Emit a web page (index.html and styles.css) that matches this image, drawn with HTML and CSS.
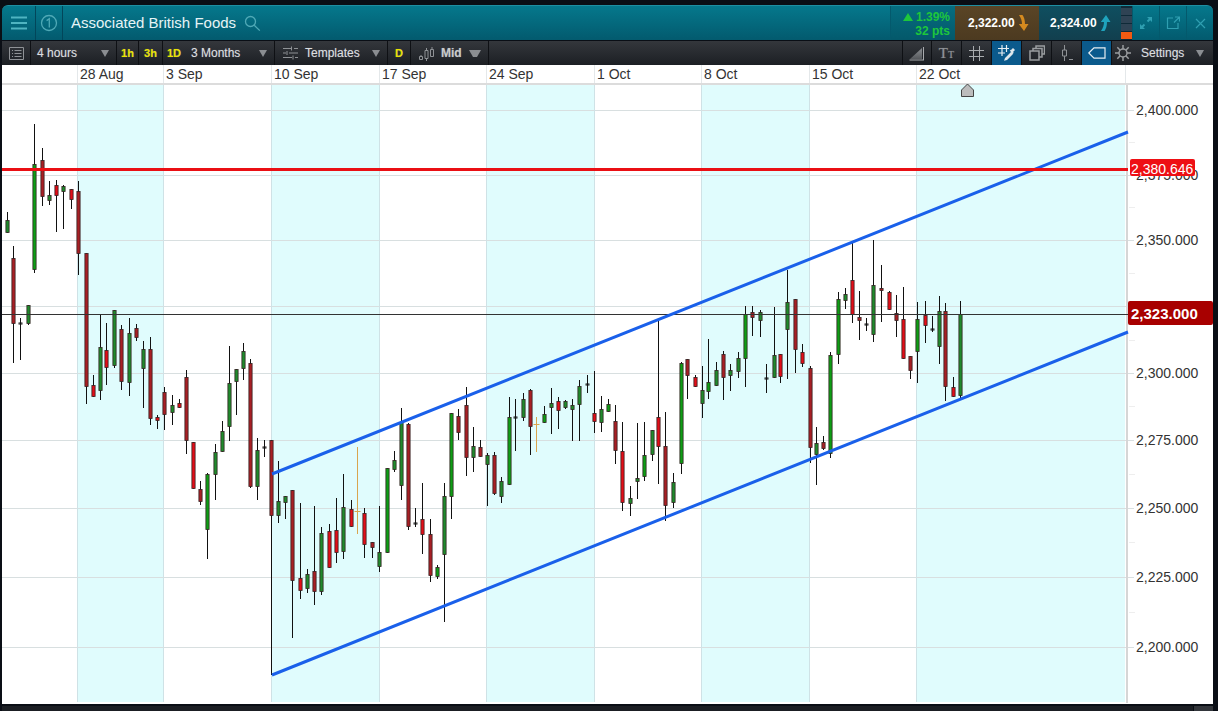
FILE: index.html
```html
<!DOCTYPE html>
<html lang="en">
<head>
<meta charset="utf-8">
<title>Associated British Foods</title>
<link rel="stylesheet" href="styles.css">
</head>
<body>
<div class="window">
  <header class="titlebar">
    <button class="tb-cell tb-menu" aria-label="Menu">
      <svg width="16" height="14" viewBox="0 0 16 14"><path class="ic-teal" d="M0 1.500h16M0 7h16M0 12.500h16"/></svg>
    </button>
    <div class="tb-cell tb-num">
      <svg width="18" height="18" viewBox="0 0 18 18"><circle class="ic-teal-thin" cx="9" cy="9" r="7.500"/><path class="ic-teal-thin" d="M6.600 6.600 9.300 4.800v8.600"/></svg>
    </div>
    <h1 class="title">Associated British Foods</h1>
    <svg class="search" width="17" height="17" viewBox="0 0 17 17"><circle class="ic-teal-thin" cx="6.500" cy="6.500" r="5"/><path class="ic-teal-thin" d="m10.200 10.200 5.600 5.400"/></svg>
    <div class="spacer"></div>
    <div class="change">
      <div class="change-top"><span class="tri-up"></span>1.39%</div>
      <div>32 pts</div>
    </div>
    <div class="quote quote-sell">
      <span>2,322.00</span>
      <svg width="11" height="16" viewBox="0 0 11 16"><path class="arrow-sell" d="M1 0h3.500c1.500 2 2.500 5 2.500 9H10.500L6 16 .8 9H4C4 6 3 3 1 0Z"/></svg>
    </div>
    <div class="quote quote-buy">
      <span>2,324.00</span>
      <svg width="11" height="16" viewBox="0 0 11 16"><path class="arrow-buy" d="M1 16h3.500C6 14 7 11 7 7h3.500L6 0 .8 7H4C4 10 3 13 1 16Z"/></svg>
    </div>
    <div class="signal"><i></i><i></i><i></i><i class="on"></i></div>
    <div class="tb-cell win-btn">
      <svg width="14" height="14" viewBox="0 0 14 14"><path class="ic-dim-fill" d="M8 1h5v5l-1.800-1.800-2 2-1.400-1.400 2-2ZM6 13H1V8l1.800 1.800 2-2 1.400 1.400-2 2Z"/></svg>
    </div>
    <div class="tb-cell win-btn">
      <svg width="14" height="14" viewBox="0 0 14 14"><path class="ic-dim" d="M7 2H1.500v10.500H12V7M8 6.500 13 1.500M9 1h4.500v4.500"/></svg>
    </div>
    <div class="tb-cell win-btn win-close">
      <svg width="11" height="11" viewBox="0 0 11 11"><path class="ic-dim" d="m1 1 9 9M10 1l-9 9"/></svg>
    </div>
  </header>

  <nav class="toolbar">
    <div class="tool tool-list">
      <svg width="15" height="13" viewBox="0 0 15 13"><path class="ic-grey" d="M.5.500h14v12H.500zM3 3.500h1M5.500 3.500h7M3 6.500h1M5.500 6.500h7M3 9.500h1M5.500 9.500h7"/></svg>
    </div>
    <div class="tool tool-select tool-hours"><span>4 hours</span><span class="caret"></span></div>
    <div class="tool tool-key tool-1h">1h</div>
    <div class="tool tool-key tool-3h">3h</div>
    <div class="tool tool-key tool-1d">1D</div>
    <div class="tool tool-select tool-months"><span>3 Months</span><span class="caret"></span></div>
    <div class="tool tool-select tool-templates">
      <svg width="15" height="14" viewBox="0 0 15 14"><path class="ic-grey" d="M0 2.500h8M11 2.500h4M8.500 .5v4M0 7h3M6 7h9M4 5v4M0 11.500h9M12 11.500h3M10 9.500v4"/></svg>
      <span>Templates</span><span class="caret"></span>
    </div>
    <div class="tool tool-key tool-d">D</div>
    <div class="tool tool-select tool-mid">
      <svg width="15" height="15" viewBox="0 0 15 15"><path class="ic-grey" d="M.5 10.500h3v3h-3zM6 4.500h3v8H6zM11.500 3.500h3v7h-3zM7.500 2v2.500M7.500 12.500V15M13 1v2.500M2 9v1.500"/></svg>
      <b>Mid</b><span class="caret"></span>
    </div>
    <div class="spacer"></div>
    <div class="tool tool-icon tool-first">
      <svg width="16" height="15" viewBox="0 0 16 15"><defs><linearGradient id="trend" x1="0" y1="0" x2="0" y2="1"><stop offset="0" stop-color="#8d9094"/><stop offset="1" stop-color="#55585c"/></linearGradient></defs><path class="ic-fill-grey" d="M1 13 13 2v11Z"/><path class="ic-light" d="M.5 14H15M14.500 1v13"/></svg>
    </div>
    <div class="tool tool-icon"><span class="tt">T<small>T</small></span></div>
    <div class="tool tool-icon tool-grid">
      <svg width="15" height="15" viewBox="0 0 15 15"><path class="ic-light" d="M4.500 0v15M10.500 0v15M0 4.500h15M0 10.500h15"/></svg>
    </div>
    <div class="tool tool-icon tool-on tool-grid-pick">
      <svg width="18" height="16" viewBox="0 0 18 16"><path class="ic-white" d="M4 0v11M8.500 0v7M0 3.500h11M0 8h7"/><path class="ic-white-fill" d="m7 13 6-6 2 2-6 6-3 .8ZM13 5l2-2 2 2-2 2 .8.800-1 1-3-3 1-1Z"/></svg>
    </div>
    <div class="tool tool-icon">
      <svg width="16" height="16" viewBox="0 0 16 16"><path class="ic-grey-2" d="M1 6h9v9H1zM4 6V3.500h9V12h-3M7 3.500V1h8.500v8H13"/></svg>
    </div>
    <div class="tool tool-icon">
      <svg width="14" height="17" viewBox="0 0 14 17"><path class="ic-grey" d="M4.500 0v5M2.500 5h4v6h-4zM4.500 11v5M9 14.500h4"/></svg>
    </div>
    <div class="tool tool-icon tool-on">
      <svg width="18" height="12" viewBox="0 0 18 12"><path class="ic-white" d="M.8 6 6 .8h11v10.400H6Z"/></svg>
    </div>
    <div class="tool tool-settings">
      <svg width="16" height="16" viewBox="0 0 16 16"><circle class="ic-grey-2" cx="8" cy="8" r="4"/><path class="ic-grey-2" d="M8 0v4M8 12v4M0 8h4M12 8h4M2.300 2.300l2.900 2.900M10.800 10.800l2.900 2.900M13.700 2.300l-2.900 2.900M5.200 10.800l-2.900 2.900"/></svg>
      <span>Settings</span><span class="caret"></span>
    </div>
  </nav>

  <div class="dates">
    <span class="date d-lead"></span>
    <span class="date d-86">28 Aug</span>
    <span class="date d-108">3 Sep</span>
    <span class="date d-108">10 Sep</span>
    <span class="date d-107">17 Sep</span>
    <span class="date d-108">24 Sep</span>
    <span class="date d-107">1 Oct</span>
    <span class="date d-108">8 Oct</span>
    <span class="date d-107">15 Oct</span>
    <span class="date d-rest">22 Oct</span>
    <span class="date d-end"></span>
  </div>

  <main class="chart">
    <svg class="canvas" width="1211" height="620" viewBox="2 84 1211 620">
      <rect class="band" x="78" y="85" width="85" height="617"/>
      <rect class="band" x="272" y="85" width="107" height="617"/>
      <rect class="band" x="487" y="85" width="107" height="617"/>
      <rect class="band" x="702" y="85" width="107" height="617"/>
      <rect class="band" x="917" y="85" width="208" height="617"/>
      <path class="grid-top" d="M2 84.500H1213"/>
      <path class="grid-h" d="M2 110.500H1134M2 175.500H1134M2 240.500H1134M2 306.500H1134M2 373.500H1134M2 440.500H1134M2 508.500H1134M2 577.500H1134M2 647.500H1134"/>
      <path class="grid-minor" d="M1129 142.500h6M1129 207.500h6M1129 273.500h6M1129 340.500h6M1129 406.500h6M1129 474.500h6M1129 542.500h6M1129 612.500h6"/>
      <path class="grid-v" d="M77.500 85V702M163.500 85V702M271.500 85V702M379.500 85V702M486.500 85V702M594.500 85V702M701.500 85V702M809.500 85V702M916.500 85V702"/>
      <path class="axis-v" d="M1127 85V703"/>
      <text class="price" x="1136" y="115">2,400.000</text>
      <text class="price" x="1136" y="180">2,375.000</text>
      <text class="price" x="1136" y="245">2,350.000</text>
      <text class="price" x="1136" y="378">2,300.000</text>
      <text class="price" x="1136" y="445">2,275.000</text>
      <text class="price" x="1136" y="513">2,250.000</text>
      <text class="price" x="1136" y="582">2,225.000</text>
      <text class="price" x="1136" y="652">2,200.000</text>
      <g id="candles"></g>
      <path class="line-last" d="M2 314.500H1128"/>
      <path class="line-channel" d="M272 474 1128 132M272 675 1128 332"/>
      <path class="line-level" d="M2 169.500H1128"/>
      <path class="marker" d="M961.500 96.500V90l6-6 6 6v6.500Z"/>
      <rect class="tag-level" x="1130" y="159" width="65" height="17" rx="2"/>
      <text class="tag-level-text" x="1131" y="174">2,380.646</text>
      <rect class="tag-last" x="1128" y="301" width="85" height="24" rx="2"/>
      <text class="tag-last-text" x="1131" y="319">2,323.000</text>
    </svg>
  </main>
  <footer class="foot"><span class="grip"></span></footer>
</div>
<script src="chart.js"></script>
</body>
</html>
```

FILE: styles.css
```css
* { box-sizing: border-box; }
html, body { margin: 0; height: 100%; overflow: hidden; background: #0a0e15; }
body { font-family: "Liberation Sans", Arial, sans-serif; color: #fff; }

.window { display: flex; flex-direction: column; width: 1211px; height: 711px; margin-left: 2px; padding-top: 5px; }
.spacer { flex: 1; }

/* title bar */
.titlebar { display: flex; align-items: stretch; height: 35px; border-radius: 6px 6px 0 0; overflow: hidden;
  background: linear-gradient(#05788c, #035a6e); border-top: 1px solid #1e8fa2; }
.tb-cell { display: flex; align-items: center; justify-content: center; border: 0; padding: 0; background: none; }
.tb-menu { width: 34px; border-right: 1px solid #02465a; }
.tb-num { width: 27px; border-right: 1px solid #02465a; }
.title { margin: 0 0 0 8px; align-self: center; font-size: 15px; font-weight: 400; line-height: 18px; color: #e6f4f6; }
.search { align-self: center; margin: 0 0 0 8px; }
.ic-teal { fill: none; stroke: #4fb4c1; stroke-width: 2; }
.ic-teal-thin { fill: none; stroke: #4fa9b6; stroke-width: 1.300; }

.change { width: 65px; padding: 4px 5px 0 0; text-align: right; font-size: 12px; font-weight: 700; line-height: 14px; color: #1ec63c;
  background: linear-gradient(#056d80, #04586a); border-left: 1px solid #04596c; }
.change-top { display: flex; justify-content: flex-end; align-items: center; gap: 3px; }
.tri-up { width: 0; height: 0; border: 5px solid transparent; border-top: 0; border-bottom: 8px solid #1ec63c; }
.quote { display: flex; align-items: center; gap: 3px; padding-left: 13px; font-size: 12px; font-weight: 700; }
.quote-sell { width: 84px; background: linear-gradient(#5a4526, #4c3a20); }
.quote-buy { width: 82px; padding-left: 11px; background: linear-gradient(#0f4f60, #123f4e); }
.arrow-sell { fill: #d58a1f; }
.arrow-buy { fill: #1fa3bd; }
.signal { display: flex; flex-direction: column; justify-content: space-between; width: 11px; padding: 2px 0 1px; background: #0f2a38; }
.signal i { display: block; height: 7px; background: #2f4354; }
.signal i.on { background: #f05a12; }
.win-btn { width: 27px; border-left: 1px solid #04596c; }
.ic-dim { fill: none; stroke: #2f9fb1; stroke-width: 1.200; }
.ic-dim-fill { fill: #2f9fb1; }

/* toolbar */
.toolbar { display: flex; align-items: stretch; height: 24px; margin-top: 1px; background: linear-gradient(#34373c, #1c1f24);
  font-size: 12px; color: #dcdee0; text-shadow: 0 0 1px rgba(255,255,255,.35); }
.tool { display: flex; align-items: center; border-right: 1px solid #0e1014; }
.tool-list { width: 29px; justify-content: center; }
.tool-select { padding: 0 7px 0 6px; gap: 8px; }
.tool-select > span:first-of-type { flex: 1; }
.tool-hours { width: 86px; }
.tool-months { width: 90px; }
.tool-templates { width: 113px; gap: 7px; padding-left: 8px; }
.tool-mid { width: 78px; gap: 7px; padding-left: 8px; color: #c8cacc; }
.tool-mid b { flex: 1; max-width: 28px; }
.tool-key { justify-content: center; font-size: 11px; font-weight: 700; color: #e9e300; }
.tool-1h { width: 22px; }
.tool-3h { width: 24px; }
.tool-1d { width: 22px; border-right: 0; }
.tool-d { width: 23px; }
.caret { width: 0; height: 0; border: 4px solid transparent; border-top: 7px solid #8b8e92; border-bottom: 0; }
.tool-icon { width: 30px; justify-content: center; }
.tool-first { border-left: 1px solid #0e1014; }
.tool-on { background: #0b5a8c; }
.tool-settings { width: 101px; gap: 10px; padding: 0 9px 0 3px; border-right: 0; }
.tool-settings span:first-of-type { flex: 1; }
.tt { font-family: "Liberation Serif", serif; font-size: 15px; color: #8f9296; }
.tt small { font-size: 10px; }
.ic-grey { fill: none; stroke: #8f9296; stroke-width: 1; }
.ic-light { fill: none; stroke: #a8abae; stroke-width: 1; }
.ic-grey-2 { fill: none; stroke: #9a9da0; stroke-width: 1.500; }
.ic-fill-grey { fill: url(#trend); }
.ic-white { fill: none; stroke: #e8eef2; stroke-width: 1.200; }
.ic-white-fill { fill: #dfe7ec; }

/* date axis */
.dates { display: flex; height: 19px; background: #fff; border-bottom: 1px solid #dcdcdc; font-size: 14px; line-height: 19px; color: #333; }
.date { display: block; padding-left: 2px; border-left: 1px solid #e4e8ea; white-space: nowrap; }
.d-lead { width: 75px; border-left: 0; }
.d-86 { width: 86px; }
.d-108 { width: 108px; }
.d-107 { width: 107px; }
.d-rest { width: 209px; }
.d-end { flex: 1; }

/* chart */
.chart { flex: 1; min-height: 0; background: #fff; }
.canvas { display: block; }
.band { fill: #e0fcfd; }
.grid-top { stroke: #dcdcdc; stroke-width: 1; fill: none; }
.grid-h { stroke: #d8dfe0; stroke-width: 1; fill: none; }
.grid-minor { stroke: #eeeeee; stroke-width: 1; fill: none; }
.grid-v { stroke: #cfe2e6; stroke-width: 1; fill: none; }
.axis-v { stroke: #d6d6d6; stroke-width: 2; fill: none; }
.price { font-size: 14px; fill: #333; }
.wick { stroke: #111; stroke-width: 1; }
.wick-o { stroke: #d9a54e; stroke-width: 1; }
.body { stroke: #332222; stroke-width: .8; }
.c-r { fill: #a81f24; }
.c-R { fill: #e30d18; }
.c-g { fill: #1f8a2c; }
.c-G { fill: #0d9e14; }
.line-last { stroke: #333; stroke-width: 1; fill: none; }
.line-channel { stroke: #1a60ea; stroke-width: 3; fill: none; }
.line-level { stroke: #ea0f14; stroke-width: 3; fill: none; }
.marker { fill: #bcbcbc; stroke: #444; stroke-width: 1; }
.tag-level { fill: #ee0f14; }
.tag-level-text { font-size: 14px; fill: #fff; }
.tag-last { fill: #a80000; }
.tag-last-text { font-size: 15px; font-weight: 700; fill: #fff; }

/* footer */
.foot { display: flex; justify-content: flex-end; height: 5px; margin-top: 2px; background: #1b1e23; }
.grip { width: 20px; background: #33363b; border-left: 1px solid #0a0e15; }
```

FILE: chart.js
```js
// x, wick top, wick bottom, body top, body bottom, colour
var candles = [
[7,212,233,220,233,'g'],[13.5,246,363,258,324,'r'],[20,318,360,322,324,'k'],[28,305,325,305,324,'g'],
[34.5,124,273,164,270,'G'],[42,148,206,160,197,'r'],[49.5,181,205,195,201,'g'],[56.5,180,232,185,196,'R'],
[63.5,185,229,186,192,'g'],[71,189,209,189,200,'R'],[78,181,275,191,254,'r'],[86,253,404,253,387,'r'],
[93,375,397,385,397,'R'],[100,315,400,347,391,'g'],[106.5,323,385,350,368,'R'],[114,310,368,310,366,'g'],
[121,325,390,329,382,'r'],[129,318,396,333,383,'g'],[136,324,341,328,338,'r'],[143,341,408,349,369,'g'],
[150,337,425,349,419,'r'],[157,415,429,417,421,'R'],[164,387,430,392,415,'r'],[172,395,425,405,413,'g'],
[179,399,408,403,408,'R'],[186,370,454,377,441,'r'],[193,442,489,442,489,'R'],[200,481,505,489,502,'r'],
[207,473,559,474,530,'G'],[215,444,500,452,475,'g'],[222,421,452,431,452,'g'],[229,346,441,383,427,'g'],
[236,369,415,369,382,'g'],[243,343,380,351,369,'g'],[250,359,488,363,487,'r'],[257.5,438,500,450,487,'g'],
[264.5,440,457,446,449,'k'],[271.5,440,675,440,516,'r'],[278.7,461,523,501,516,'g'],[285.7,496,519,496,503,'g'],
[292.7,490,638,490,581,'r'],[300.7,503,599,578,591,'R'],[307.7,569,593,574,589,'g'],[314.7,506,605,571,592,'r'],
[321.7,527,595,533,592,'g'],[329,524,568,531,568,'R'],[336.7,498,563,530,553,'R'],[343.7,474,559,507,552,'g'],
[351,500,527,509,527,'R'],[357.3,447,534,511,511,'o'],[364.7,508,558,513,545,'R'],[372,542,558,542,548,'r'],
[379.7,506,572,552,567,'g'],[387,468,553,468,553,'G'],[394,451,472,460,470,'g'],[401,408,500,422,486,'g'],
[408,423,530,424,527,'r'],[415,508,527,522,524,'k'],[422.7,483,554,519,535,'R'],[430,519,582,534,576,'r'],
[437,565,579,567,577,'G'],[444,483,622,496,555,'g'],[451,413,519,413,497,'G'],[458,409,440,416,433,'r'],
[466,387,476,405,458,'r'],[473,427,472,446,458,'g'],[480,440,457,447,457,'r'],[487,453,506,455,465,'g'],
[494,452,495,455,494,'r'],[501,477,503,481,497,'g'],[509,397,485,417,485,'G'],[515.7,399,451,416,418,'k'],
[523,393,421,399,418,'g'],[530,389,455,390,427,'r'],[536.3,417,452,424,424,'o'],[544.7,406,423,414,423,'G'],
[551.7,388,434,403,408,'g'],[558.7,397,429,401,411,'R'],[565.7,400,409,401,408,'g'],[572.7,399,441,405,410,'g'],
[579.7,380,441,386,405,'g'],[587.3,375,393,383,386,'k'],[594.7,371,433,413,422,'R'],[601.7,396,432,409,423,'g'],
[608.7,399,412,404,412,'G'],[615.7,405,464,421,451,'r'],[622.7,422,511,451,503,'R'],[630.7,486,516,498,504,'g'],
[637.7,423,499,478,482,'g'],[644.7,422,481,455,477,'G'],[652,430,461,430,455,'g'],[658.7,321,484,417,447,'R'],
[665.7,412,521,446,506,'r'],[673.7,473,508,482,503,'g'],[681,362,474,363,464,'G'],[687.7,359,399,359,376,'r'],
[695,375,387,377,387,'R'],[702,366,418,390,404,'g'],[708.7,339,399,382,392,'G'],[716.7,362,386,370,386,'g'],
[723.7,351,400,354,378,'r'],[730.7,364,391,370,376,'g'],[738,352,378,358,372,'g'],[745,306,387,314,359,'G'],
[752,306,336,312,318,'r'],[760,310,337,312,321,'g'],[766.7,364,393,377,380,'k'],[774,307,378,355,378,'g'],
[780.7,354,383,354,377,'R'],[787.7,270,379,302,330,'g'],[795.7,299,373,299,350,'r'],[802.7,344,367,352,364,'R'],
[810,366,463,368,448,'r'],[816.7,427,485,443,455,'g'],[823.7,436,450,442,449,'r'],[830.7,352,458,355,454,'G'],
[838.7,292,364,299,355,'G'],[845.7,288,309,294,301,'g'],[852.7,243,323,280,315,'R'],[859.7,291,340,317,321,'r'],
[866.7,318,331,323,325,'k'],[873.7,240,342,285,335,'g'],[881.7,265,322,288,291,'r'],[889,291,310,292,310,'R'],
[896,295,337,313,321,'r'],[903,287,359,319,359,'R'],[910,356,379,356,371,'r'],[917,302,383,319,352,'G'],
[925,301,343,315,326,'R'],[932,316,332,328,330,'k'],[939,296,364,311,347,'g'],[945.7,303,401,311,387,'r'],
[953,377,397,387,397,'R'],[960,301,400,314,396,'g']
];

var out = '';
candles.forEach(function (c) {
  var x = Math.floor(c[0]) + 0.5, type = c[5];
  if (type === 'o') {
    out += '<path class="wick-o" d="M' + x + ' ' + c[1] + 'V' + c[2] + 'M' + (x - 3) + ' ' + (c[3] + 0.5) + 'h6"/>';
    return;
  }
  out += '<path class="wick" d="M' + x + ' ' + c[1] + 'V' + c[2] + '"/>';
  if (type === 'k') {
    out += '<path class="wick" d="M' + (x - 2) + ' ' + (c[3] + 1) + 'h4"/><path class="wick" d="M' + (x - 2) + ' ' + (c[3] + 2) + 'h4"/>';
  } else {
    out += '<rect class="body c-' + type + '" x="' + (x - 1.6) + '" y="' + (c[3] + 0.5) + '" width="3.2" height="' + Math.max(c[4] - c[3] - 1, 1) + '"/>';
  }
});
document.getElementById('candles').innerHTML = out;
```
